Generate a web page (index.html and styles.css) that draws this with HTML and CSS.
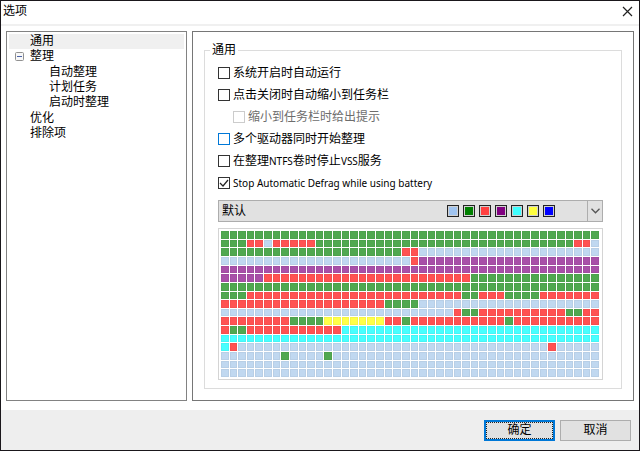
FILE: index.html
```html
<!doctype html>
<html lang="zh-CN">
    <head>
        <meta charset="UTF-8" />
        <meta name="viewport" content="width=device-width, initial-scale=1.0" />
        <title>选项</title>
        <link rel="stylesheet" href="styles.css">
    </head>
    <body>
        <form class="dialog">
            <header class="title-bar">
                <h1>选项</h1>
                <button type="button" class="close-btn" aria-label="关闭">
                    <svg width="11" height="11" viewBox="0 0 11 11">
                        <path d="M1 1 L10 10 M10 1 L1 10" fill="none" stroke="#222" stroke-width="1.2" />
                    </svg>
                </button>
            </header>

            <main class="content">
                <nav class="tree">
                    <ul>
                        <li><a href="#general" class="selected">通用</a></li>
                        <li class="parent">
                            <div class="parent-row">
                                <button type="button" class="toggle" aria-label="折叠">
                                    <svg width="9" height="9" viewBox="0 0 9 9">
                                        <rect x="0.5" y="0.5" width="8" height="8" rx="1" fill="#f8f8f8" stroke="#919191" />
                                        <path d="M2 4.5 H7" stroke="#4b63a7" />
                                    </svg>
                                </button>
                                <a href="#defrag">整理</a>
                            </div>
                            <ul class="children">
                                <li><a href="#auto">自动整理</a></li>
                                <li><a href="#schedule">计划任务</a></li>
                                <li><a href="#boot">启动时整理</a></li>
                            </ul>
                        </li>
                        <li><a href="#optimize">优化</a></li>
                        <li><a href="#exclude">排除项</a></li>
                    </ul>
                </nav>

                <section class="panel">
                    <fieldset class="group">
                        <legend>通用</legend>
                        <div class="option">
                            <input type="checkbox" id="startup" />
                            <label for="startup">系统开启时自动运行</label>
                        </div>
                        <div class="option">
                            <input type="checkbox" id="minimize" />
                            <label for="minimize">点击关闭时自动缩小到任务栏</label>
                        </div>
                        <div class="option sub-option">
                            <input type="checkbox" id="notify" disabled />
                            <label for="notify">缩小到任务栏时给出提示</label>
                        </div>
                        <div class="option">
                            <input type="checkbox" id="multi" class="hot" />
                            <label for="multi">多个驱动器同时开始整理</label>
                        </div>
                        <div class="option">
                            <input type="checkbox" id="vss" />
                            <label for="vss">在整理<span class="latin">NTFS</span>卷时停止<span class="latin">VSS</span>服务</label>
                        </div>
                        <div class="option">
                            <input type="checkbox" id="battery" checked />
                            <label for="battery" class="latin">Stop Automatic Defrag while using battery</label>
                        </div>

                        <div class="scheme">
                            <select id="scheme" aria-label="配色方案">
                                <option>默认</option>
                            </select>
                            <div class="swatches">
                                <span class="swatch light"></span>
                                <span class="swatch green"></span>
                                <span class="swatch red"></span>
                                <span class="swatch purple"></span>
                                <span class="swatch cyan"></span>
                                <span class="swatch yellow"></span>
                                <span class="swatch blue"></span>
                            </div>
                            <div class="arrow">
                                <svg width="9" height="6" viewBox="0 0 9 6">
                                    <path d="M0.5 0.8 L4.5 4.8 L8.5 0.8" fill="none" stroke="#555" stroke-width="1.3" />
                                </svg>
                            </div>
                        </div>

                        <div class="drive-map" id="drive-map"></div>
                    </fieldset>
                </section>
            </main>

            <footer class="buttons">
                <button type="button" class="btn primary">确定</button>
                <button type="button" class="btn">取消</button>
            </footer>
        </form>

        <script src="map.js"></script>
    </body>
</html>
```

FILE: styles.css
```css
* {
    box-sizing: border-box;
    margin: 0;
    padding: 0;
}

body {
    font-family: 'Liberation Sans', 'Noto Sans CJK SC', sans-serif;
    font-size: 12px;
    line-height: 15px;
    color: #000;
    background-color: white;
}

button,
select {
    font: inherit;
    color: inherit;
}

a {
    color: inherit;
    text-decoration: none;
}

ul {
    list-style: none;
}

.dialog {
    display: flex;
    flex-direction: column;
    min-height: 100vh;
    border: 1px solid #1a171b;
}

/* Title bar */
.title-bar {
    display: flex;
    align-items: center;
    justify-content: space-between;
    height: 25px;
    padding: 0 6px 2px 2px;
    border-bottom: 2px solid #f0f0f0;
}

.title-bar h1 {
    font-size: 12px;
    font-weight: 400;
}

.close-btn {
    display: flex;
    border: none;
    background: none;
}

.content {
    flex: 1;
    display: flex;
    gap: 5px;
    padding: 5px 5px 9px;
}

/* Tree */
.tree {
    width: 181px;
    padding: 2px;
    border: 1px solid #828282;
}

.tree a {
    display: block;
    padding-left: 21px;
}

.tree .selected {
    background-color: #f0f0f0;
}

.parent-row {
    display: flex;
    align-items: center;
    padding-left: 6px;
}

.tree .parent-row a {
    padding-left: 6px;
}

.toggle {
    display: flex;
    border: none;
    background: none;
}

.children {
    padding: 1px 0;
}

.tree .children a {
    padding-left: 40px;
}

/* Options panel */
.panel {
    flex: 1;
    min-width: 0;
    display: flex;
    padding: 11px;
    border: 1px solid #767676;
}

.group {
    flex: 1;
    min-width: 0;
    padding: 4px 18px 8px 13px;
    border: 1px solid #dcdcdc;
}

.group legend {
    margin-left: -8px;
    padding: 0 2px;
}

.option {
    display: flex;
    align-items: center;
    gap: 3px;
    height: 22px;
}

.sub-option {
    padding-left: 15px;
    color: #6d6d6d;
}

.latin {
    font-family: 'Noto Sans', sans-serif;
    font-size: 10px;
}

input[type='checkbox'] {
    appearance: none;
    width: 12px;
    height: 12px;
    border: 1px solid #333;
    background-color: white;
}

input[type='checkbox']:disabled {
    border-color: #ccc;
}

input[type='checkbox'].hot {
    border-color: #0078d7;
}

input[type='checkbox']:checked {
    background-image: url("data:image/svg+xml,%3Csvg xmlns='http://www.w3.org/2000/svg' viewBox='0 0 10 10'%3E%3Cpath d='M1 5 L4 8 L9 2' fill='none' stroke='%23222' stroke-width='1.2'/%3E%3C/svg%3E");
}

/* Colour scheme */
.scheme {
    position: relative;
    margin-top: 6px;
}

.scheme select {
    display: block;
    appearance: none;
    width: 100%;
    height: 22px;
    padding-left: 3px;
    border: 1px solid #adadad;
    border-radius: 0;
    background-color: #e1e1e1;
}

.swatches {
    position: absolute;
    top: 5px;
    right: 48px;
    display: flex;
    gap: 4px;
    pointer-events: none;
}

.swatch {
    width: 12px;
    height: 12px;
    border: 1px solid #222;
    box-shadow: inset 0 0 0 1px #d0d0d0;
}

.arrow {
    position: absolute;
    top: 0;
    right: 0;
    bottom: 0;
    width: 16px;
    display: flex;
    align-items: center;
    justify-content: center;
    border: 1px solid #adadad;
    pointer-events: none;
}

.swatch.light { background-color: #a0c4f0; }
.swatch.green { background-color: #008000; }
.swatch.red { background-color: #ff4040; }
.swatch.purple { background-color: #800080; }
.swatch.cyan { background-color: #40ffff; }
.swatch.yellow { background-color: #ffff40; }
.swatch.blue { background-color: #0000ff; }

/* Drive map */
.drive-map {
    display: grid;
    grid-template-columns: repeat(44, 1fr);
    grid-template-rows: repeat(17, 1fr);
    gap: 1px;
    height: 152px;
    margin-top: 6px;
    padding: 2px 3px 2px 2px;
    border: 1px solid #d4d4d4;
}

.cell {
    box-shadow: inset 0 0 0 1px rgba(0, 0, 0, 0.04);
}

.cell.B { background-color: #c0d8f0; }
.cell.G { background-color: #50a850; }
.cell.R { background-color: #ff5252; }
.cell.P { background-color: #a850a8; }
.cell.C { background-color: #48ffff; }
.cell.Y { background-color: #ffff48; }

/* Footer */
.buttons {
    display: flex;
    justify-content: flex-end;
    gap: 5px;
    padding: 10px 8px 9px;
    background-color: #eee;
}

.btn {
    width: 71px;
    height: 21px;
    border: 1px solid #adadad;
    background-color: #e1e1e1;
}

.btn.primary {
    border: 2px solid #0078d7;
    outline: 1px dotted #222;
    outline-offset: -3px;
}
```

FILE: map.js
```js
// Each row is a list of runs: cluster type followed by its length
const rows = [
    'G44',
    'G3 R2 B1 R5 G30 R2 B1',
    'G21 R2 B21',
    'B22 R1 P21',
    'P44',
    'P5 R24 G15',
    'G44',
    'G3 R25 G2 R3 G4 R7',
    'R19 G4 B21',
    'B27 R1 G2 R10 G2 R2',
    'R8 G4 Y7 R2 G1 R11 G1 R10',
    'R1 G2 R11 C30',
    'C44',
    'C1 R1 B36 R1 B5',
    'B7 G1 B4 G1 B31',
    'B44',
    'B44',
];

const map = document.getElementById('drive-map');

rows.forEach((row) => {
    row.split(' ').forEach((run) => {
        for (let i = 0; i < Number(run.slice(1)); i++) {
            const cell = document.createElement('div');
            cell.className = 'cell ' + run[0];
            map.appendChild(cell);
        }
    });
});
```
